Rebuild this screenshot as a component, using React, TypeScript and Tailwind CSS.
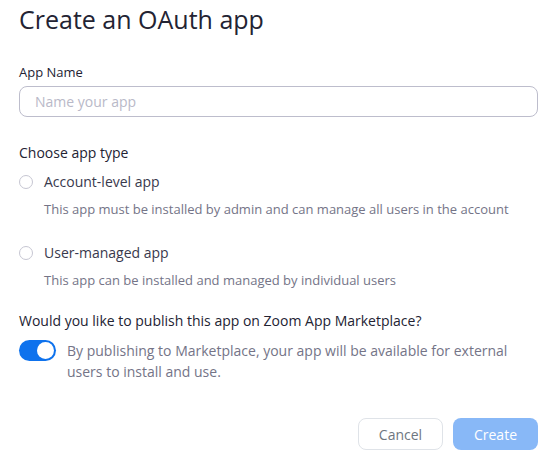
import React, { useState } from 'react'

export default function App() {
  const [appType, setAppType] = useState<string | null>(null)
  const [publish, setPublish] = useState(true)

  const types = [
    { id: 'account', label: 'Account-level app', desc: 'This app must be installed by admin and can manage all users in the account' },
    { id: 'user', label: 'User-managed app', desc: 'This app can be installed and managed by individual users' },
  ]

  return (
    <div className="w-[557px] h-[464px] bg-white px-[19px] pt-[2px] font-['Open_Sans',sans-serif] text-[#232333]">
      <h1 className="text-[25px] leading-[34px] font-normal">Create an OAuth app</h1>

      <label className="block mt-[26px] text-[13px] leading-[20px] font-medium">App Name</label>
      <input
        placeholder="Name your app"
        className="mt-[4px] w-[519px] h-[31px] rounded-[8px] border border-[#bdbdcc] px-[15px] text-[14px] outline-none placeholder:text-[#b9b9c8]"
      />

      <div className="mt-[26px] text-[14px] leading-[20px]">Choose app type</div>
      <div className="mt-[9px] flex flex-col gap-[24px]">
        {types.map((t) => (
          <div key={t.id} className="cursor-pointer" onClick={() => setAppType(t.id)}>
            <div className="flex items-center gap-[11px]">
              <span className={"w-[14px] h-[14px] rounded-full border flex items-center justify-center " + (appType === t.id ? 'border-[#0e72ed]' : 'border-[#c6c6d2]')}>
                {appType === t.id && <span className="w-[6px] h-[6px] rounded-full bg-[#0e72ed]" />}
              </span>
              <span className="text-[14px] leading-[20px] text-[#39394d]">{t.label}</span>
            </div>
            <div className="mt-[7px] pl-[25px] text-[13px] leading-[20px] text-[#747487]">{t.desc}</div>
          </div>
        ))}
      </div>

      <div className="mt-[21px] text-[14px] leading-[20px] font-medium">Would you like to publish this app on Zoom App Marketplace?</div>
      <div className="mt-[9px] flex items-start gap-[11px]">
        <button
          onClick={() => setPublish(!publish)}
          className={"shrink-0 w-[37px] h-[21px] rounded-full flex items-center px-[2px] " + (publish ? 'bg-[#0e72ed] justify-end' : 'bg-[#c6c6d2] justify-start')}
        >
          <span className="w-[17px] h-[17px] rounded-full bg-white" />
        </button>
        <p className="text-[14px] leading-[21px] text-[#747487] w-[450px]">
          By publishing to Marketplace, your app will be available for external users to install and use.
        </p>
      </div>

      <div className="mt-[36px] flex justify-end gap-[10px]">
        <button className="w-[85px] h-[32px] rounded-[8px] border border-[#dfe3e8] text-[14px] text-[#6e7680]">Cancel</button>
        <button disabled className="w-[85px] h-[32px] rounded-[8px] bg-[#88b8f7] text-[14px] text-white">Create</button>
      </div>
    </div>
  )
}
